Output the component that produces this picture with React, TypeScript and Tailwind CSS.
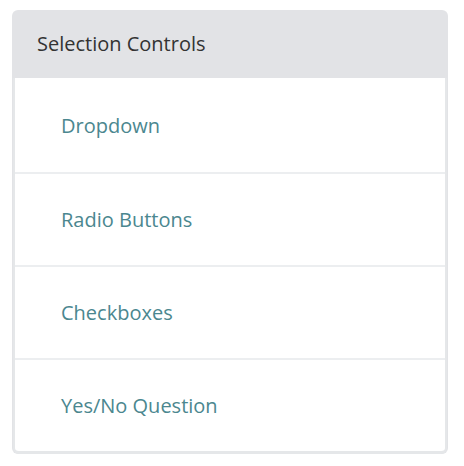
const items = ['Dropdown', 'Radio Buttons', 'Checkboxes', 'Yes/No Question']

export default function App() {
  return (
    <div className="min-h-[466px] bg-white pl-3 pr-4 pt-[10px] font-['Open_Sans',sans-serif]">
      <div className="w-[436px] rounded-md bg-[#e2e3e6]">
        <div className="flex h-[68px] items-center pl-[25px] text-[20px] text-[#333]">Selection Controls</div>
        <div className="mx-px rounded-b-md border-x-2 border-b-[3px] border-[#e5e7e9] bg-white">
          {items.map((item, i) => (
            <div
              key={item}
              className={`flex items-center pl-[46px] text-[20px] text-[#4b878f] ${i > 0 ? 'h-[93px] border-t-2 border-[#eceef0]' : 'h-[94px] pt-px'}`}
            >
              {item}
            </div>
          ))}
        </div>
      </div>
    </div>
  )
}
